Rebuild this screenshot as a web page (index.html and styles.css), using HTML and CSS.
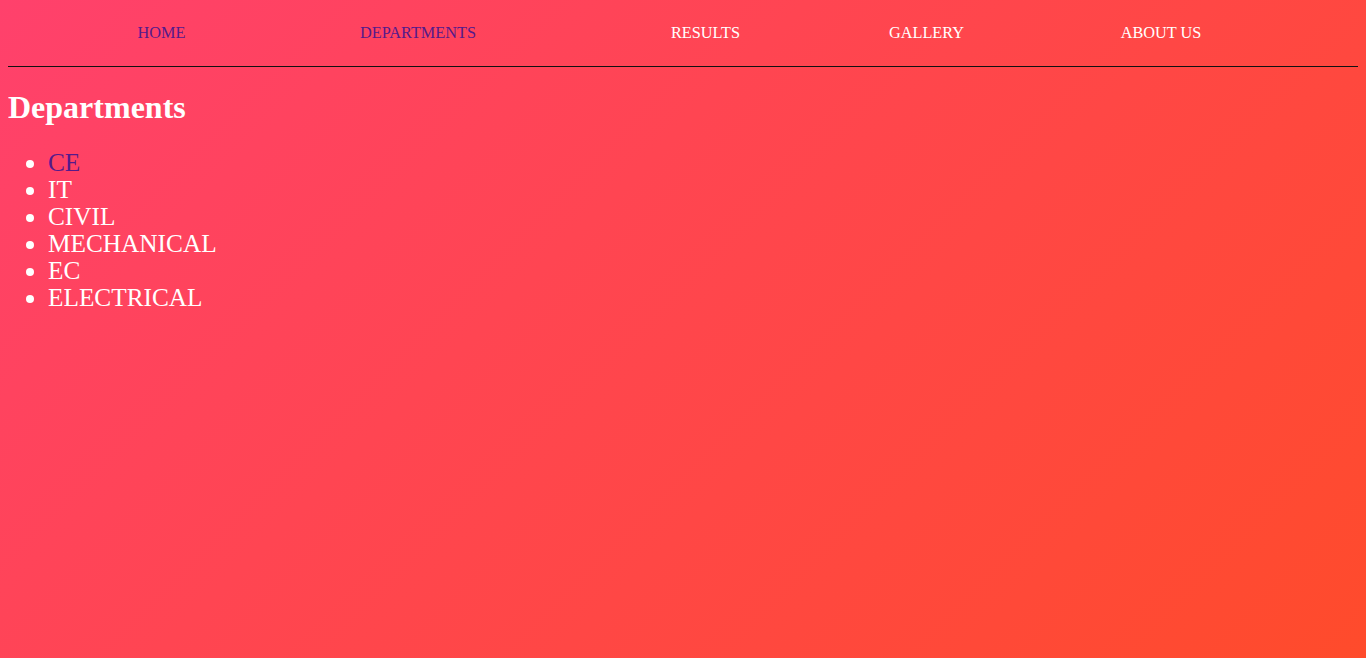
FILE: index.html
```html
<!DOCTYPE html>
<html lang="en">
<head>
<meta charset="utf-8">
<title>Departments</title>
<link rel="stylesheet" href="styles.css">
</head>
<body>
<nav class="nav">
  <a class="nav-link visited" href="#">HOME</a>
  <a class="nav-link visited" href="#">DEPARTMENTS</a>
  <a class="nav-link" href="#">RESULTS</a>
  <a class="nav-link" href="#">GALLERY</a>
  <a class="nav-link" href="#">ABOUT US</a>
</nav>
<hr class="rule">
<h1 class="title">Departments</h1>
<ul class="dept-list">
  <li><a class="dept visited" href="#">CE</a></li>
  <li><a class="dept" href="#">IT</a></li>
  <li><a class="dept" href="#">CIVIL</a></li>
  <li><a class="dept" href="#">MECHANICAL</a></li>
  <li><a class="dept" href="#">EC</a></li>
  <li><a class="dept" href="#">ELECTRICAL</a></li>
</ul>
</body>
</html>
```
FILE: styles.css
```css
html {
  min-height: 100%;
  background: linear-gradient(135deg, #ff416c, #ff4b2b);
}
body {
  margin: 8px;
  font-family: "Liberation Serif", "Times New Roman", serif;
  color: #fff;
}
.nav {
  display: flex;
  padding-top: 16px;
  font-size: 16.3px;
  line-height: 18px;
}
.nav-link {
  width: 160px;
  text-align: center;
  color: #fff;
  text-decoration: none;
}
.nav-link:nth-child(1) { margin-left: 73.5px; }
.nav-link:nth-child(2) { margin-left: 96.5px; }
.nav-link:nth-child(3) { margin-left: 127.5px; }
.nav-link:nth-child(4) { margin-left: 61px; }
.nav-link:nth-child(5) { margin-left: 74.5px; }
.nav-link.visited { color: #551a8b; }
.rule {
  margin: 24px 0 0;
  border: none;
  border-top: 1px solid #111;
  height: 0;
}
.title {
  font-size: 32px;
  font-weight: bold;
  margin: 21.5px 0 22.5px;
  color: #fff;
}
.dept-list {
  margin: 23.5px 0 16px;
  padding-left: 40px;
  font-size: 25.3px;
  line-height: 27px;
}
.dept {
  color: #fff;
  text-decoration: none;
}
.dept.visited { color: #551a8b; }
```
